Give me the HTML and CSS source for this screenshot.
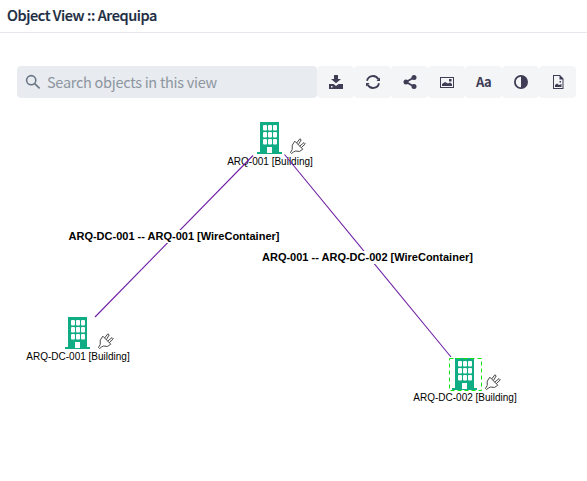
FILE: index.html
```html
<!DOCTYPE html>
<html lang="en">
<head>
<meta charset="utf-8">
<title>Object View</title>
<link rel="stylesheet" href="styles.css">
</head>
<body>
<header class="title-bar"><h1>Object View :: Arequipa</h1></header>
<div class="toolbar">
  <label class="search">
    <svg class="search-icon" viewBox="0 0 16 16"><circle cx="6.2" cy="6.2" r="4.600"/><path d="M9.700 9.700 14.600 14.400"/></svg>
    <span class="placeholder">Search objects in this view</span>
  </label>
  <button class="tool"><svg viewBox="0 0 16 16"><path d="M6 1h4v4h3L8 9.300 3 5h3zM1 10h4.500L8 12l2.500-2H15v5H1zM3 12v1.500h1.500V12z" fill-rule="evenodd"/></svg></button>
  <button class="tool"><svg viewBox="0 0 16 16"><path class="stroke" d="M2 6.800A6.100 6.100 0 0 1 13.300 5.200M14 9.200A6.100 6.100 0 0 1 2.700 10.800"/><path d="M15 3.500v3.500h-3.500zM1 12.500V9h3.500z"/></svg></button>
  <button class="tool"><svg viewBox="0 0 16 16"><path class="stroke" d="M12 3.500 4 8l8 4.500"/><circle cx="12" cy="3.500" r="2.500"/><circle cx="4" cy="8" r="2.500"/><circle cx="12" cy="12.500" r="2.500"/></svg></button>
  <button class="tool"><svg viewBox="0 0 16 16"><path d="M1 3h14v11H1zM2 4v9h12V4zM3 12V10l3-2 3 1.500 2-1 2 1.500V12zM10 5h2.500v2.500H10z" fill-rule="evenodd"/></svg></button>
  <button class="tool tool-text">Aa</button>
  <button class="tool"><svg viewBox="0 0 16 16"><path d="M8 1a7 7 0 1 0 0 14A7 7 0 0 0 8 1zm0 1.800v10.400A5.200 5.200 0 0 1 8 2.800z" fill-rule="evenodd"/></svg></button>
  <button class="tool"><svg viewBox="0 0 16 16"><path d="M3 1h7l3.500 3.500V15H3zM4 2v12h8.500V5.500H9.500V2zM5 13v-2l2-1.500 2 1.500 2.500-1v3zM9.500 7h1.500v1.500H9.500z" fill-rule="evenodd"/></svg></button>
</div>
<main class="canvas">
  <svg class="edges" viewBox="0 0 587 481">
    <path d="M95 317 253 155.500"/><path d="M284.500 154.500 451 357"/>
  </svg>
  <svg class="defs">
    <defs>
      <symbol id="building" viewBox="0 0 32 32">
        <path fill="#10ad84" d="M6 0h19v30h3v2h-25v-2h3z"/>
        <g fill="#fff"><rect x="9" y="3" width="4" height="5.500" rx="1"/><rect x="14" y="3" width="4" height="5.500" rx="1"/><rect x="19" y="3" width="4" height="5.500" rx="1"/><rect x="9" y="10" width="4" height="5.500" rx="1"/><rect x="14" y="10" width="4" height="5.500" rx="1"/><rect x="19" y="10" width="4" height="5.500" rx="1"/><rect x="9" y="17" width="4" height="5.500" rx="1"/><rect x="14" y="17" width="4" height="5.500" rx="1"/><rect x="19" y="17" width="4" height="5.500" rx="1"/><path d="M13 25h5v6h-5z"/></g>
      </symbol>
      <symbol id="plug" viewBox="0 0 16 16">
        <path fill="#fff" stroke="#333" stroke-width=".9" stroke-linejoin="round" d="M4.800 3.200 12.800 11.200Q9.800 14.800 5.500 13L3.500 14 1.500 15.500.5 14.500 2.200 11.500Q1 7 4.800 3.200zM6.600 5 9.900.8 11.200 1.900 8.400 6.600M9.700 8.100 14 4.600 15.300 5.900 11.300 9.700"/>
      </symbol>
    </defs>
  </svg>
  <div class="node node-a"><svg class="building"><use href="#building"/></svg><svg class="plug"><use href="#plug"/></svg><span>ARQ-001 [Building]</span></div>
  <div class="node node-b"><svg class="building"><use href="#building"/></svg><svg class="plug"><use href="#plug"/></svg><span>ARQ-DC-001 [Building]</span></div>
  <div class="node node-c"><svg class="building"><use href="#building"/></svg><svg class="plug"><use href="#plug"/></svg><span>ARQ-DC-002 [Building]</span><svg class="selection"><rect x=".5" y=".5" width="32" height="32"/></svg></div>
  <span class="edge-label edge-ab">ARQ-DC-001 -- ARQ-001 [WireContainer]</span>
  <span class="edge-label edge-ac">ARQ-001 -- ARQ-DC-002 [WireContainer]</span>
</main>
</body>
</html>
```
FILE: styles.css
```css
body { margin: 0; height: 481px; overflow: hidden; background: #fff; font-family: "Noto Sans CJK SC", "Noto Sans", sans-serif; color: #1b2b41; }
.title-bar { box-sizing: border-box; height: 33px; padding-left: 7px; border-bottom: 1px solid #e4e7eb; }
h1 { margin: 0; font-size: 14.5px; line-height: 30px; font-weight: 500; letter-spacing: -0.42px; -webkit-text-stroke: 0.2px currentColor; }
.toolbar { display: flex; margin: 33px 0 0 17px; height: 32px; }
.search { display: flex; align-items: center; box-sizing: border-box; width: 300px; padding-left: 8px; border-radius: 4px; background: #e8ebef; }
.search-icon { width: 16px; height: 16px; margin-right: 6px; fill: none; stroke: #6b7685; stroke-width: 1.6; }
.placeholder { font-size: 14.5px; line-height: 28px; margin-top: -1px; letter-spacing: -0.28px; color: #8d959f; }
.tool { display: flex; align-items: center; justify-content: center; width: 37px; padding: 0; border: 0; border-radius: 4px; background: #f3f5f7; color: #403c56; }
.tool svg { width: 16px; height: 16px; fill: currentColor; }
.tool .stroke { fill: none; stroke: currentColor; stroke-width: 1.8; }
.tool-text { padding-bottom: 2px; font: 700 13px "Noto Sans CJK SC", sans-serif; letter-spacing: -0.6px; }
.edges { position: absolute; left: 0; top: 0; width: 587px; height: 481px; z-index: 1; fill: none; stroke: #7020a5; stroke-width: 1.1; }
.defs { position: absolute; width: 0; height: 0; }
.node { position: absolute; width: 32px; height: 32px; }
.node-a { left: 254px; top: 122px; }
.node-b { left: 62px; top: 317px; }
.node-c { left: 449px; top: 358px; }
.building { display: block; width: 32px; height: 32px; }
.plug { position: absolute; left: 36px; top: 16px; width: 16px; height: 16px; }
.selection { position: absolute; left: 0; top: 0; width: 33px; height: 33px; fill: none; stroke: #14e614; stroke-width: 1; stroke-dasharray: 4 3; }
.node span { position: absolute; left: 50%; top: 34px; transform: translateX(-50%); white-space: nowrap; font: 10px/12px "Liberation Sans", Arial, sans-serif; color: #000; }
.edge-label { position: absolute; z-index: 2; white-space: nowrap; background: #fff; font: bold 11px/13px "Liberation Sans", Arial, sans-serif; color: #000; }
.edge-ab { left: 68.5px; top: 230px; }
.edge-ac { left: 262px; top: 251px; }
```
